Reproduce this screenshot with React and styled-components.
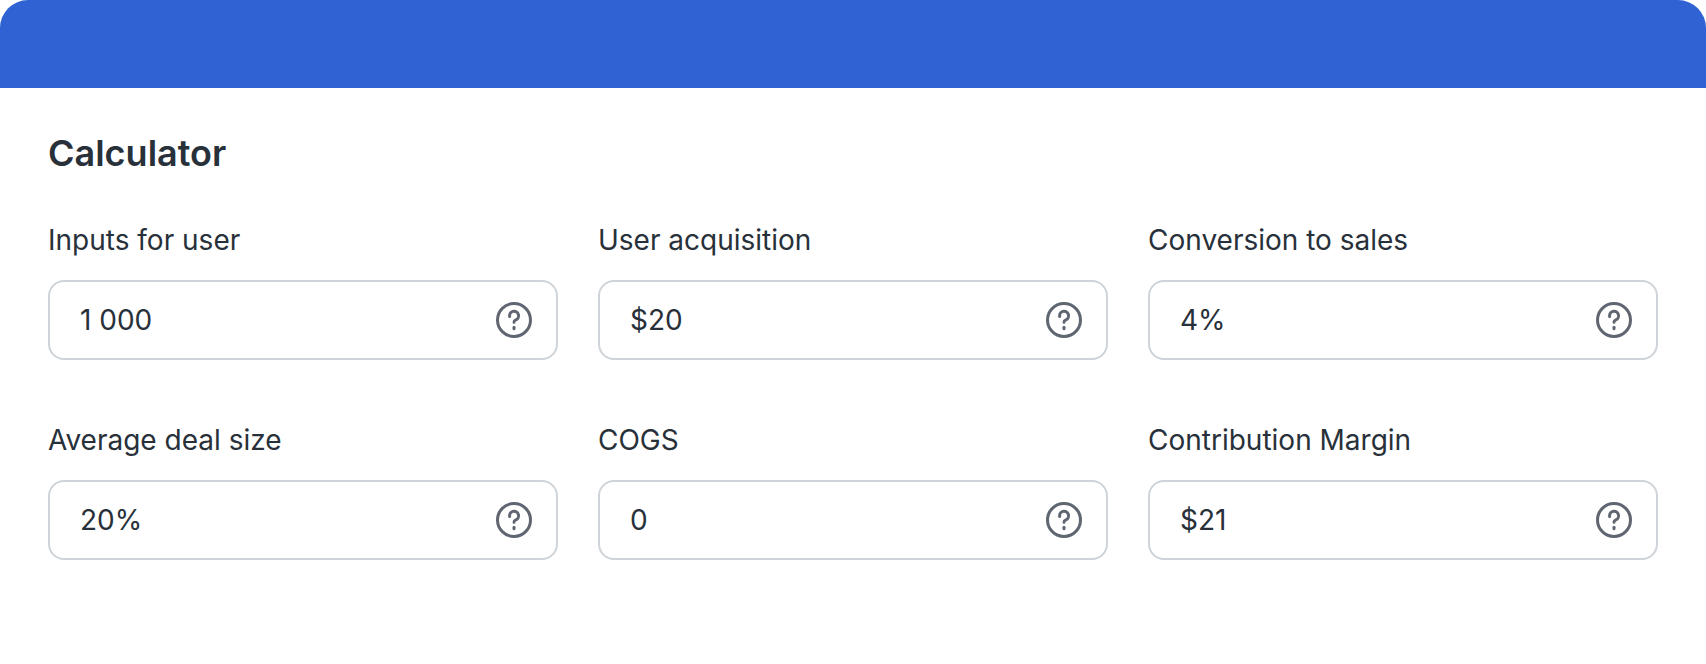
import React, { useState } from 'react'
import styled, { createGlobalStyle } from 'styled-components'

const GlobalStyle = createGlobalStyle`
  * {
    box-sizing: border-box;
  }

  body {
    margin: 0;
    background: #ffffff;
    color: #28303a;
    font-family: Inter, 'Liberation Sans', sans-serif;
  }
`

const Card = styled.main`
  min-height: 100vh;
  border-radius: 28px;
  overflow: hidden;
  background: #ffffff;
`

const Banner = styled.header`
  height: 88px;
  background: #3062d4;
`

const Form = styled.form`
  padding: 45px 48px 60px;
`

const Title = styled.h1`
  margin: 0 0 47px;
  font-size: 36px;
  font-weight: 600;
  line-height: 40px;
`

const Fields = styled.div`
  display: grid;
  grid-template-columns: repeat(3, minmax(0, 1fr));
  gap: 60px 40px;
`

const Field = styled.div`
  display: flex;
  flex-direction: column;
  gap: 20px;
`

const Label = styled.label`
  font-size: 28px;
  line-height: 40px;
`

const InputBox = styled.div`
  display: flex;
  align-items: center;
  height: 80px;
  padding: 0 22px 0 30px;
  border: 2px solid #ced4da;
  border-radius: 16px;

  &:focus-within {
    border-color: #3062d4;
  }
`

const Input = styled.input`
  flex: 1;
  min-width: 0;
  padding: 0;
  border: 0;
  outline: 0;
  background: none;
  color: inherit;
  font-family: inherit;
  font-size: 28px;
  line-height: 40px;
`

const HelpButton = styled.button`
  display: flex;
  padding: 0;
  border: 0;
  background: none;
  color: #5f6671;
  cursor: pointer;
`

const fields = [
  { id: 'users', label: 'Inputs for user', value: '1 000' },
  { id: 'acquisition', label: 'User acquisition', value: '$20' },
  { id: 'conversion', label: 'Conversion to sales', value: '4%' },
  { id: 'deal', label: 'Average deal size', value: '20%' },
  { id: 'cogs', label: 'COGS', value: '0' },
  { id: 'margin', label: 'Contribution Margin', value: '$21' },
]

const HelpIcon = () => (
  <svg width='40' height='40' viewBox='0 0 40 40' fill='none' aria-hidden='true'>
    <circle cx='20' cy='20' r='16.5' stroke='currentColor' strokeWidth='3' />
    <path
      d='M15.6 16.4v-.6a4.5 4.5 0 1 1 6.2 4.1c-1.2.5-1.8 1-1.8 2.4'
      stroke='currentColor'
      strokeWidth='3'
      strokeLinecap='round'
      strokeLinejoin='round'
    />
    <rect x='18.5' y='25.8' width='3' height='4.4' rx='1.5' fill='currentColor' />
  </svg>
)

const App = () => {
  const [values, setValues] = useState(
    Object.fromEntries(fields.map((field) => [field.id, field.value]))
  )

  const handleChange = (e) => {
    setValues({ ...values, [e.target.id]: e.target.value })
  }

  return (
    <>
      <GlobalStyle />
      <Card>
        <Banner />
        <Form>
          <Title>Calculator</Title>
          <Fields>
            {fields.map(({ id, label }) => (
              <Field key={id}>
                <Label htmlFor={id}>{label}</Label>
                <InputBox>
                  <Input id={id} type='text' value={values[id]} onChange={handleChange} />
                  <HelpButton type='button' aria-label={`Help: ${label}`}>
                    <HelpIcon />
                  </HelpButton>
                </InputBox>
              </Field>
            ))}
          </Fields>
        </Form>
      </Card>
    </>
  )
}

export default App
